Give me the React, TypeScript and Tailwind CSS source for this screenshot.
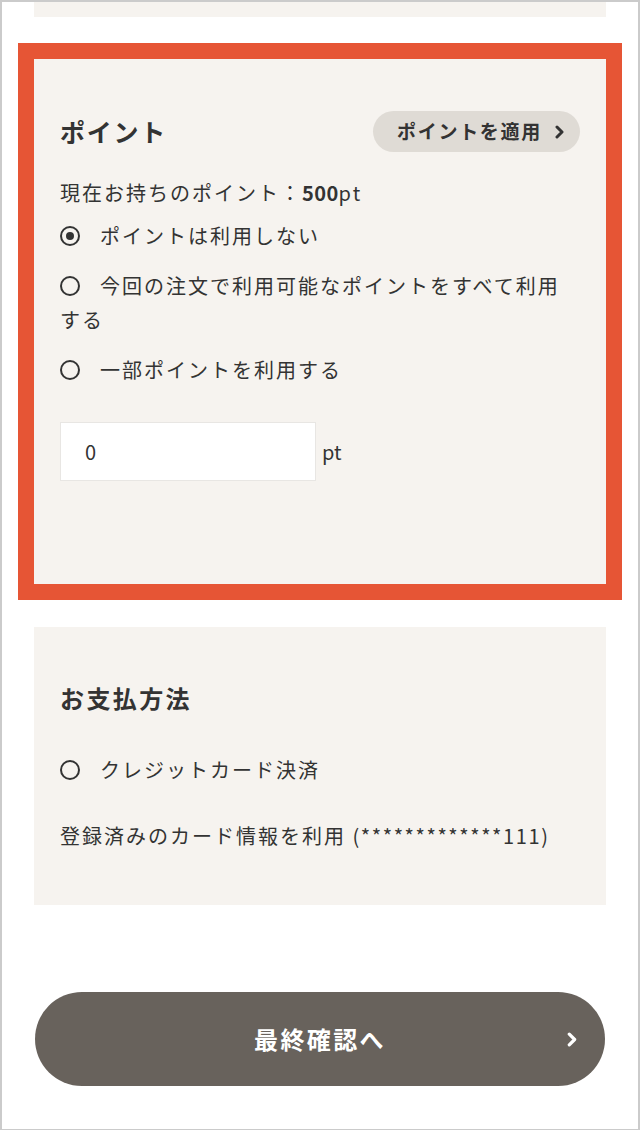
import { useState } from 'react';

function Radio({ checked }: { checked: boolean }) {
  return (
    <span className="mt-[7px] flex h-5 w-5 shrink-0 items-center justify-center rounded-full border-2 border-[#333]">
      {checked && <span className="h-2 w-2 rounded-full bg-[#333]" />}
    </span>
  );
}

function Chevron({ className }: { className: string }) {
  return (
    <svg viewBox="0 0 12 14" className={className} fill="none">
      <path d="M3 2l5 5-5 5" stroke="currentColor" strokeWidth="3" strokeLinecap="round" strokeLinejoin="round" />
    </svg>
  );
}

const options = [
  'ポイントは利用しない',
  '今回の注文で利用可能なポイントをすべて利用する',
  '一部ポイントを利用する',
];

export default function App() {
  const [selected, setSelected] = useState(0);
  const [points, setPoints] = useState('0');

  return (
    <div
      className="min-h-[1130px] border-2 border-[#cbcbcb] bg-white text-[#333]"
      style={{ fontFamily: '"Noto Sans CJK JP", "Noto Sans", sans-serif' }}
    >
      <div className="mx-8 h-[15px] bg-[#f6f3ef]" />

      <div className="mx-4 mt-[26px] border-[16px] border-[#e65535]">
        <section className="bg-[#f6f3ef] px-[26px] pt-[52px] pb-[103px]">
          <div className="flex h-[41px] items-center justify-between">
            <h2 className="text-[25px] font-bold tracking-[0.07em]">ポイント</h2>
            <button className="flex h-[41px] items-center gap-[12px] rounded-full bg-[#dfdbd5] pl-6 pr-[14px] text-[19px] font-bold tracking-[0.09em]">
              <span>ポイントを適用</span>
              <Chevron className="h-[14px] w-[12px]" />
            </button>
          </div>

          <p className="mt-6 text-[20px] leading-[34px] tracking-[0.1em]">
            現在お持ちのポイント：<span className="font-bold tracking-[0.02em]">500</span>pt
          </p>

          <div className="mt-[9px] flex flex-col gap-4">
            {options.map((label, i) => (
              <label
                key={label}
                onClick={() => setSelected(i)}
                className="cursor-pointer text-[20px] leading-[34px] tracking-[0.1em]"
              >
                <span className="float-left mr-5">
                  <Radio checked={selected === i} />
                </span>
                {label}
              </label>
            ))}
          </div>

          <div className="mt-[35px] flex items-center gap-[6px]">
            <input
              value={points}
              onChange={(e) => setPoints(e.target.value)}
              className="h-[59px] w-[256px] border border-[#e8e6e3] bg-white px-6 text-[20px] outline-none"
            />
            <span className="text-[20px]">pt</span>
          </div>
        </section>
      </div>

      <section className="mx-8 mt-[27px] bg-[#f6f3ef] px-[26px] pt-[51px] pb-[52px]">
        <h2 className="text-[24px] font-bold leading-[40px] tracking-[0.1em]">お支払方法</h2>
        <label className="mt-[35px] flex gap-5 text-[20px] leading-[34px] tracking-[0.1em]">
          <Radio checked={false} />
          クレジットカード決済
        </label>
        <p className="mt-8 text-[20px] leading-[34px] tracking-[0.1em]">
          登録済みのカード情報を利用 <span className="tracking-[0.08em]">(*************111)</span>
        </p>
      </section>

      <div className="mx-[33px] mt-[87px] pb-[43px]">
        <button className="relative flex h-[94px] w-full items-center justify-center rounded-full bg-[#68625c] text-[24px] font-bold tracking-[0.1em] text-white">
          最終確認へ
          <Chevron className="absolute right-[26px] h-[15px] w-[13px]" />
        </button>
      </div>
    </div>
  );
}
